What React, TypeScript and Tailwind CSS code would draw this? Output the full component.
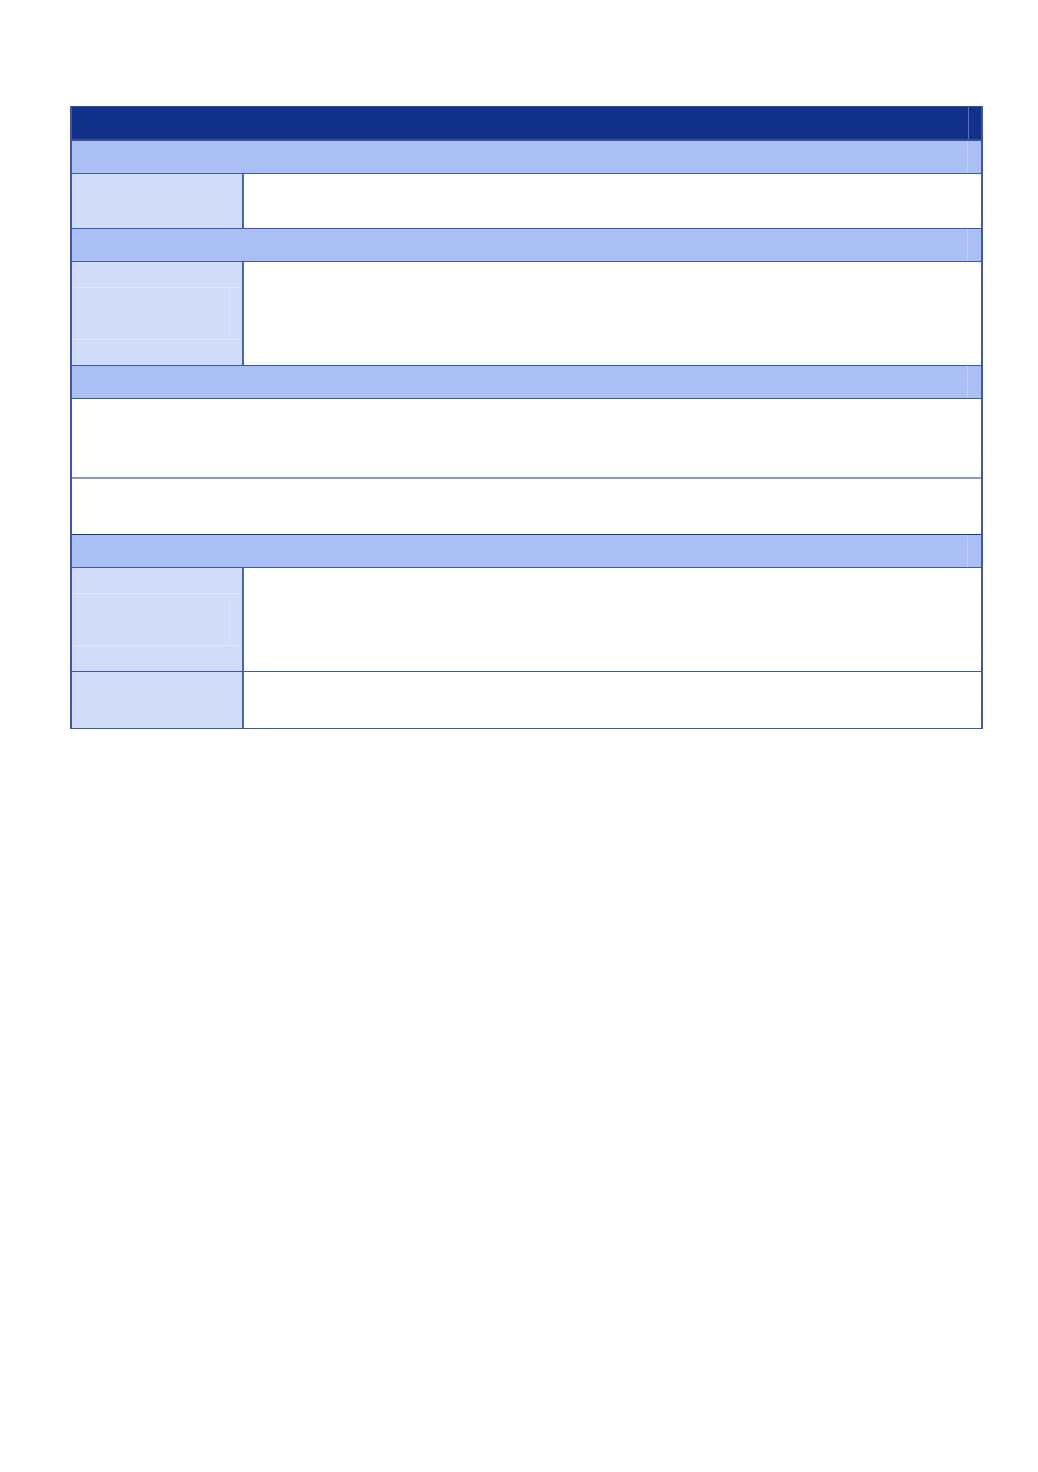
import React from 'react';

const Section = () => (
  <div className="flex h-[33px] border-b border-[#3d58a8] bg-[#aabff3]">
    <div className="flex-1 border-r border-[#c3d1f7]" />
    <div className="w-[13px]" />
  </div>
);

const Pair = ({ h, lines = false }: { h: string; lines?: boolean }) => (
  <div className={`flex ${h} border-b border-[#3d58a8]`}>
    <div className="relative w-[172px] shrink-0 border-r-2 border-[#4a64ad] bg-[#d1dcf8]">
      {lines && (
        <>
          <div className="absolute left-0 right-0 top-[25px] h-px bg-[#dde6fb]" />
          <div className="absolute left-0 right-0 bottom-[25px] h-px bg-[#dde6fb]" />
        </>
      )}
      <div className="absolute top-[26px] bottom-[26px] right-[12px] w-px bg-[#dbe3fa]" />
    </div>
    <div className="flex-1 bg-white" />
  </div>
);

export default function App() {
  return (
    <div className="min-h-[1472px] bg-white pt-[106px] pl-[70px]">
      <div className="flex w-[913px] flex-col border-x-2 border-[#3d58a8]">
        <div className="flex h-[35px] border-t border-b-2 border-[#3a4f8f] bg-[#12318a]">
          <div className="flex-1 border-r border-[#5a6fae]" />
          <div className="w-[12px]" />
        </div>
        <Section />
        <Pair h="h-[55px]" />
        <Section />
        <Pair h="h-[104px]" lines />
        <Section />
        <div className="h-[80px] border-b-2 border-[#8a9cc4] bg-white" />
        <div className="h-[56px] border-b border-[#1f3a8a] bg-white" />
        <Section />
        <Pair h="h-[104px]" lines />
        <Pair h="h-[57px]" />
      </div>
    </div>
  );
}
